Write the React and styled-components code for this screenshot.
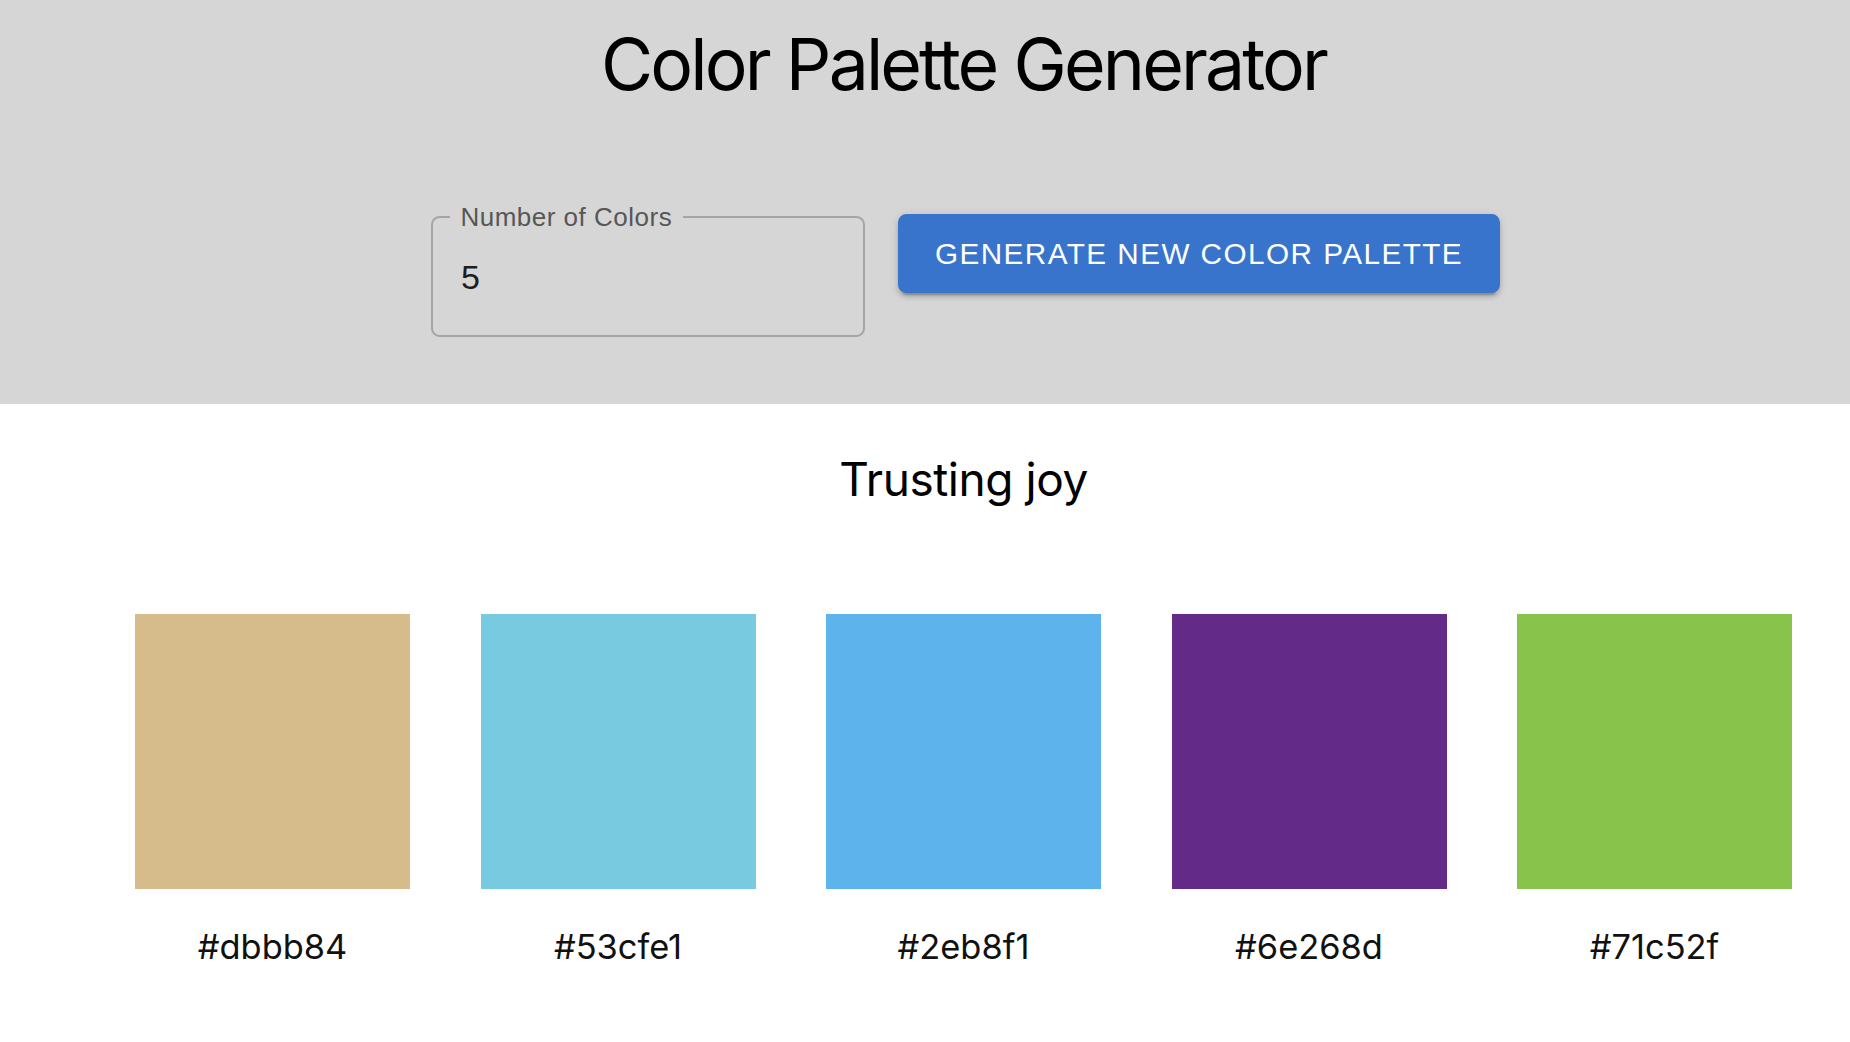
import React from 'react';
import styled, { createGlobalStyle } from 'styled-components';

const GlobalStyle = createGlobalStyle`
    html, body {
        margin: 0;
        padding: 0;
        background: #ffffff;
        overflow: hidden;
    }
    * {
        box-sizing: border-box;
    }
`;

const Header = styled.header`
    background: #d6d6d6;
    height: 404px;
    padding: 20px 0 0 77px;
`;

const Title = styled.h1`
    margin: 0;
    font-family: Inter, "Liberation Sans", sans-serif;
    font-weight: 400;
    font-size: 71.5px;
    line-height: 1.235;
    letter-spacing: -2.9px;
    color: #000;
    text-align: center;
`;

const Controls = styled.form`
    display: flex;
    justify-content: center;
    align-items: flex-start;
    gap: 33px;
    margin-top: 91px;
    padding-left: 4px;
`;

const Field = styled.fieldset`
    width: 434px;
    height: 138px;
    margin: 0;
    padding: 0;
    border: 2px solid #a6a6a6;
    border-radius: 8.5px;
`;

const Legend = styled.legend`
    margin-left: 17px;
    padding: 0 10.5px;
    font-family: "Liberation Sans", Arial, sans-serif;
    font-size: 26px;
    line-height: 36px;
    letter-spacing: 0.5px;
    color: #575757;
`;

const NumberInput = styled.input`
    display: block;
    width: 100%;
    height: 49px;
    margin-top: 18px;
    padding: 0 0 0 28px;
    border: none;
    background: transparent;
    outline: none;
    font-family: "Liberation Sans", Arial, sans-serif;
    font-size: 34px;
    color: #1e1e1e;
    -moz-appearance: textfield;
    &::-webkit-inner-spin-button,
    &::-webkit-outer-spin-button {
        -webkit-appearance: none;
        margin: 0;
    }
`;

const GenerateButton = styled.button`
    margin-top: 15px;
    padding: 13.5px 37px;
    border: none;
    border-radius: 8.5px;
    background: #3874cb;
    color: #ffffff;
    font-family: "Liberation Sans", Arial, sans-serif;
    font-size: 29.7px;
    line-height: 52px;
    letter-spacing: 1.45px;
    text-transform: uppercase;
    cursor: pointer;
    box-shadow: 0 6px 2px -4px rgba(0, 0, 0, 0.2), 0 4px 4px 0 rgba(0, 0, 0, 0.14), 0 2px 10px 0 rgba(0, 0, 0, 0.12);
`;

const Palette = styled.section`
    padding: 48px 0 0 77px;
`;

const PaletteName = styled.h2`
    margin: 0;
    font-family: Inter, "Liberation Sans", sans-serif;
    font-weight: 400;
    font-size: 46px;
    line-height: 1.2;
    letter-spacing: -0.01em;
    color: #000;
    text-align: center;
`;

const Swatches = styled.div`
    display: flex;
    justify-content: center;
    gap: 70.5px;
    margin-top: 107px;
`;

const SwatchItem = styled.div`
    display: flex;
    flex-direction: column;
    align-items: center;
    width: 275px;
`;

const Swatch = styled.div`
    width: 275px;
    height: 275px;
    background: ${props => props.color};
`;

const HexLabel = styled.span`
    margin-top: 32px;
    font-family: Inter, "Liberation Sans", sans-serif;
    font-size: 34.4px;
    line-height: 1.5;
    color: #111;
`;

const colors = [
    { hex: '#dbbb84', shown: '#d6bc8a' },
    { hex: '#53cfe1', shown: '#77cadf' },
    { hex: '#2eb8f1', shown: '#5db3ec' },
    { hex: '#6e268d', shown: '#642a88' },
    { hex: '#71c52f', shown: '#88c44c' },
];

export default function App() {
    return (
        <>
            <GlobalStyle />
            <Header>
                <Title>Color Palette Generator</Title>
                <Controls onSubmit={e => e.preventDefault()}>
                    <Field>
                        <Legend>Number of Colors</Legend>
                        <NumberInput type="number" defaultValue={5} />
                    </Field>
                    <GenerateButton type="submit">Generate new color palette</GenerateButton>
                </Controls>
            </Header>
            <Palette>
                <PaletteName>Trusting joy</PaletteName>
                <Swatches>
                    {colors.map((c, i) => (
                        <SwatchItem key={i}>
                            <Swatch color={c.shown} />
                            <HexLabel>{c.hex}</HexLabel>
                        </SwatchItem>
                    ))}
                </Swatches>
            </Palette>
        </>
    );
}
